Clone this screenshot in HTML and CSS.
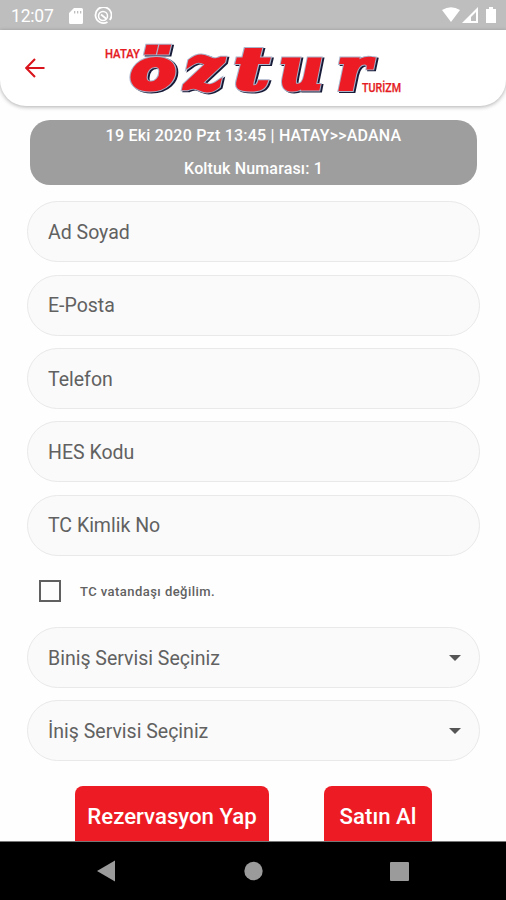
FILE: index.html
```
<!DOCTYPE html>
<html lang="tr">
<head>
<meta charset="utf-8">
<title>Hatay Öztur Turizm</title>
<link rel="stylesheet" href="styles.css">
</head>
<body>
<div class="screen">
  <div class="status">
    <span class="clock">12:07</span>
    <svg class="sd" width="14" height="16" viewBox="0 0 14 16"><path fill="#fff" fill-rule="evenodd" d="M5 0h7.5Q14 0 14 1.5v13Q14 16 12.500 16h-11Q0 16 0 14.500V5zM5 3v2.500h1.300V3zM8 3v2.500h1.300V3zM11 3v2.500h1.300V3z"/></svg>
    <svg class="dnd" width="18" height="18" viewBox="0 0 18 18" fill="none" stroke="#fff"><path stroke-width="1.800" d="M13.500 15A8 8 0 1 1 15.800 13"/><circle cx="9" cy="9" r="4.500" stroke-width="1.500"/><path stroke-width="1.800" d="M7 7.500l5.500 4.500"/></svg>
    <svg class="signals" width="56" height="17" viewBox="0 0 56 17"><path fill="#fff" d="M0 3Q9-2.500 18 3L9 15z"/><path fill="#fff" fill-rule="evenodd" d="M36 0v16H20zM34 5l-5 5v4h5z"/><path fill="#fff" d="M47 0h4v2h3v14H44V2h3z"/></svg>
  </div>
  <header class="header">
    <svg class="back" width="20" height="20" viewBox="0 0 20 20" fill="none" stroke="#d9141c" stroke-width="2.100"><path d="M19.500 10H1.500M10 1L1.200 10l8.800 9"/></svg>
    <svg class="logo" width="310" height="60" viewBox="100 38 310 60">
      <defs>
        <g id="word">
          <text class="round" x="130" y="88.500" textLength="46" lengthAdjust="spacingAndGlyphs">ö</text>
          <text class="slab" x="185" y="88.500" textLength="38" lengthAdjust="spacingAndGlyphs">z</text>
          <text class="slab" x="234" y="88.500" textLength="35" lengthAdjust="spacingAndGlyphs">t</text>
          <text class="slab" x="279" y="88.500" textLength="44" lengthAdjust="spacingAndGlyphs">u</text>
          <text class="slab" x="337" y="88.500" textLength="33" lengthAdjust="spacingAndGlyphs">r</text>
        </g>
      </defs>
      <use href="#word" class="shade" x="1.800" y="1.200" aria-hidden="true"/>
      <use href="#word" class="edge" aria-hidden="true"/>
      <use href="#word" class="face" aria-hidden="true"/>
      <text class="small" x="105" y="57.500" textLength="35" lengthAdjust="spacingAndGlyphs">HATAY</text>
      <text class="small" x="362" y="92" textLength="39" lengthAdjust="spacingAndGlyphs">TURİZM</text>
    </svg>
  </header>
  <main class="content">
    <div class="trip"><p class="route">19 Eki 2020 Pzt 13:45 | HATAY&gt;&gt;ADANA</p><p class="seat">Koltuk Numarası: 1</p></div>
    <div class="fields">
      <div class="field"><span>Ad Soyad</span></div>
      <div class="field"><span>E-Posta</span></div>
      <div class="field"><span>Telefon</span></div>
      <div class="field"><span>HES Kodu</span></div>
      <div class="field"><span>TC Kimlik No</span></div>
    </div>
    <div class="check"><i class="box"></i><span>TC vatandaşı değilim.</span></div>
    <div class="fields">
      <div class="field"><span>Biniş Servisi Seçiniz</span><i class="caret"></i></div>
      <div class="field"><span>İniş Servisi Seçiniz</span><i class="caret"></i></div>
    </div>
    <div class="actions"><div class="btn reserve">Rezervasyon Yap</div><div class="btn buy">Satın Al</div></div>
  </main>
  <nav class="nav">
    <svg width="506" height="58" viewBox="0 0 506 58" fill="#9b9b9b"><path d="M97 29l18-10.500v21z"/><circle cx="253.500" cy="29" r="9.200"/><rect x="390" y="20" width="19" height="19" rx="1"/></svg>
  </nav>
</div>
</body>
</html>
```
FILE: styles.css
```
* { box-sizing: border-box; }
body { margin: 0; background: #fefefe; font-family: Roboto, "Liberation Sans", sans-serif; }
p { margin: 0; }
svg { display: block; flex: none; }
.screen { width: 506px; height: 900px; display: flex; flex-direction: column; overflow: hidden; background: #fefefe; }
.status { height: 30px; flex: none; background: #bebebe; color: #fff; display: flex; align-items: center; padding: 1px 8px 0 11px; }
.clock { font-size: 17.5px; width: 58px; letter-spacing: -0.2px; white-space: nowrap; }
.dnd { margin-left: 11px; }
.signals { margin-left: auto; }
.header { height: 76px; flex: none; background: #fff; border-radius: 0 0 26px 26px; box-shadow: 0 1px 4px rgba(0,0,0,.32); display: flex; align-items: flex-start; padding-left: 25px; }
.back { margin-top: 28px; }
.logo { margin: 8px 0 0 55px; }
.round { font: italic bold 55px "DejaVu Sans", sans-serif; }
.slab { font: italic bold 57px "DejaVu Serif", serif; }
.shade { fill: #171b38; stroke: #171b38; stroke-width: 5px; }
.edge { fill: #a9b4cb; stroke: #a9b4cb; stroke-width: 5px; }
.face { fill: #ed1c24; stroke: #ed1c24; stroke-width: 3.2px; }
.small { font: 500 12px Roboto, sans-serif; fill: #e51c24; stroke: #e51c24; stroke-width: .25px; }
.content { flex: 1; min-height: 0; overflow: hidden; padding: 14.400px 26px 0 27px; }
.trip { height: 65px; margin: 0 3px 16.100px; border-radius: 20px; background: #9e9e9e; color: #fff; text-align: center; font-size: 16px; font-weight: 500; line-height: 32.500px; }
.route { letter-spacing: 0.22px; }
.seat { letter-spacing: 0.15px; }
.fields { display: flex; flex-direction: column; gap: 12.300px; }
.field { height: 61px; border: 1.5px solid #e9e9e9; border-radius: 31px; background: #fafafa; display: flex; align-items: center; justify-content: space-between; padding: 1px 18px 0 20px; color: #616161; font-size: 19.500px; }
.check { height: 71.500px; display: flex; align-items: center; padding-left: 12px; color: #616161; font-size: 13px; font-weight: 500; letter-spacing: 0.45px; }
.box { width: 22px; height: 22px; border: 2px solid #606060; margin-right: 19px; }
.caret { border: 6px solid transparent; border-top-color: #555; border-bottom: 0; }
.actions { display: flex; gap: 55px; padding: 25px 0 0 48px; }
.btn { height: 62px; border-radius: 8px; background: #ed1c24; color: #fff; font-size: 22.200px; font-weight: 500; line-height: 61px; text-align: center; white-space: nowrap; }
.reserve { width: 194px; }
.buy { width: 108px; }
.nav { height: 59px; flex: none; background: #000; border-top: 1px solid #777; }
```
